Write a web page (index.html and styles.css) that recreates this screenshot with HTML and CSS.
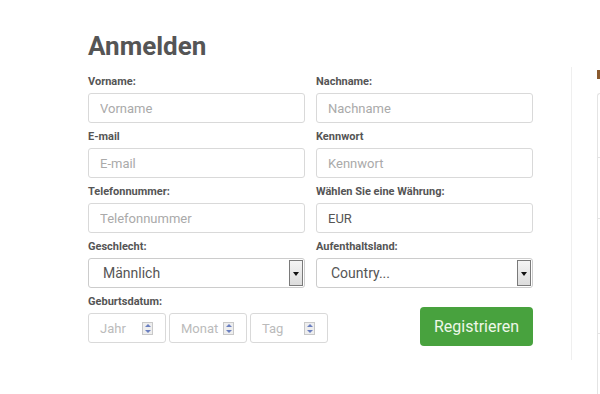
FILE: index.html
```html
<!DOCTYPE html>
<html lang="de">
<head>
  <meta charset="UTF-8">
  <meta name="viewport" content="width=device-width, initial-scale=1.0">
  <title>Anmelden</title>
  <link rel="stylesheet" href="styles.css">
</head>
<body>

<div class="page">
  <div class="register">
    <h1>Anmelden</h1>

    <form class="form-grid">
      <div class="field">
        <label>Vorname:</label>
        <input type="text" placeholder="Vorname">
      </div>
      <div class="field">
        <label>Nachname:</label>
        <input type="text" placeholder="Nachname">
      </div>

      <div class="field">
        <label>E-mail</label>
        <input type="text" placeholder="E-mail">
      </div>
      <div class="field">
        <label>Kennwort</label>
        <input type="password" placeholder="Kennwort">
      </div>

      <div class="field">
        <label>Telefonnummer:</label>
        <input type="text" placeholder="Telefonnummer">
      </div>
      <div class="field">
        <label>Wählen Sie eine Währung:</label>
        <input type="text" value="EUR">
      </div>

      <div class="field">
        <label>Geschlecht:</label>
        <div class="select">
          <span class="select-value">Männlich</span>
          <span class="select-arrow"></span>
        </div>
      </div>
      <div class="field">
        <label>Aufenthaltsland:</label>
        <div class="select">
          <span class="select-value">Country...</span>
          <span class="select-arrow"></span>
        </div>
      </div>

      <div class="field">
        <label>Geburtsdatum:</label>
        <div class="date-row">
          <div class="date-box"><span>Jahr</span><span class="spin"></span></div>
          <div class="date-box"><span>Monat</span><span class="spin"></span></div>
          <div class="date-box"><span>Tag</span><span class="spin"></span></div>
        </div>
      </div>
      <div class="field submit">
        <button type="button">Registrieren</button>
      </div>
    </form>
  </div>

  <div class="divider"></div>

  <!-- rechte Spalte, abgeschnitten -->
  <div class="side">
    <div class="side-title"></div>
    <div class="side-box">
      <div class="side-row r1"></div>
      <div class="side-row r2"></div>
      <div class="side-row r3"></div>
    </div>
  </div>
</div>

</body>
</html>
```

FILE: styles.css
```css
body {
  margin: 0;
  font-family: Roboto, "Liberation Sans", Arial, sans-serif;
  color: #555;
  background: #fff;
  overflow: hidden;
}
.page {
  display: flex;
  height: 394px;
}
.register {
  width: 445px;
  padding-left: 88px;
  padding-top: 31px;
}
h1 {
  margin: 0 0 14px;
  font-size: 26px;
  line-height: 30px;
  font-weight: 700;
  color: #555;
}
.form-grid {
  display: grid;
  grid-template-columns: 217px 217px;
  column-gap: 11px;
  row-gap: 7px;
}
.field label {
  display: block;
  font-size: 11px;
  line-height: 14px;
  font-weight: 700;
  color: #555;
  margin-bottom: 4px;
}
.field input {
  box-sizing: border-box;
  width: 100%;
  height: 30px;
  border: 1px solid #d9d9d9;
  border-radius: 3px;
  padding: 0 11px;
  font-family: inherit;
  font-size: 13px;
  color: #555;
  outline: none;
}
.field input::placeholder {
  color: #aaa;
}
.select {
  box-sizing: border-box;
  height: 30px;
  border: 1px solid #ccc;
  border-radius: 3px;
  display: flex;
  align-items: center;
  justify-content: space-between;
  padding: 0 1px 0 14px;
  font-size: 14px;
  color: #555;
}
.select-arrow {
  box-sizing: border-box;
  width: 14px;
  height: 26px;
  border: 1px solid #7a7a7a;
  background: linear-gradient(#f4f4f4, #dcdcdc);
  position: relative;
}
.select-arrow::after {
  content: "";
  position: absolute;
  left: 3px;
  top: 11px;
  border-left: 3px solid transparent;
  border-right: 3px solid transparent;
  border-top: 4px solid #111;
}
.date-row {
  display: flex;
  gap: 3px;
}
.date-box {
  box-sizing: border-box;
  flex: 0 0 78px;
  height: 30px;
  border: 1px solid #d9d9d9;
  border-radius: 3px;
  display: flex;
  align-items: center;
  justify-content: space-between;
  padding: 0 12px 0 11px;
  font-size: 13px;
  color: #bbb;
}
.spin {
  box-sizing: border-box;
  width: 11px;
  height: 13px;
  border: 1px solid #c8c8c8;
  background: #eee;
  position: relative;
}
.spin::before,
.spin::after {
  content: "";
  position: absolute;
  left: 2px;
  border-left: 3px solid transparent;
  border-right: 3px solid transparent;
}
.spin::before {
  top: 1px;
  border-bottom: 3px solid #6a7fc0;
}
.spin::after {
  bottom: 1px;
  border-top: 3px solid #6a7fc0;
}
.submit {
  display: flex;
  justify-content: flex-end;
  align-items: flex-start;
  padding-top: 12px;
}
.submit button {
  width: 113px;
  height: 39px;
  border: none;
  border-radius: 4px;
  background: #48a23e;
  color: #eef7e8;
  font-family: inherit;
  font-size: 16px;
  cursor: pointer;
}
.divider {
  width: 1px;
  background: #efefef;
  margin: 67px 0 34px 38px;
}
.side {
  margin-left: 25px;
  padding-top: 70px;
  flex: 1;
}
.side-title {
  width: 3px;
  height: 9px;
  background: #8a5a2e;
}
.side-box {
  margin-top: 14px;
  height: 300px;
  border-left: 1px solid #e4e4e4;
  border-top: 1px solid #e4e4e4;
  border-top-left-radius: 4px;
  position: relative;
}
.side-row {
  position: absolute;
  left: 0;
  right: 0;
  border-top: 1px solid #e4e4e4;
}
.r1 { top: 63px; }
.r2 { top: 124px; }
.r3 { top: 239px; }
```
